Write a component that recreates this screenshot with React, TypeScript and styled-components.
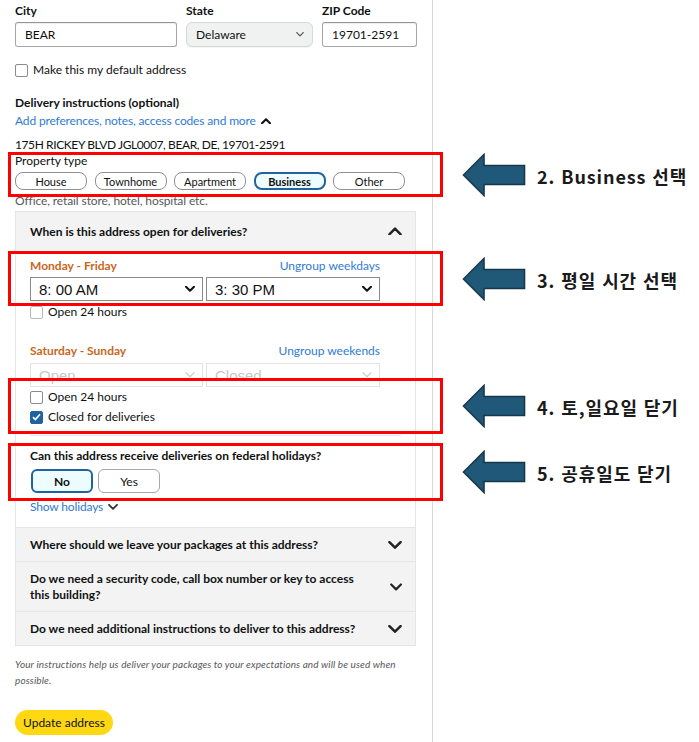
import React from 'react';
import styled, { createGlobalStyle } from 'styled-components';

const GlobalStyle = createGlobalStyle`
  body {
    margin: 0;
    background: #fff;
    font-family: Lato, "Noto Sans", sans-serif;
    font-size: 12px;
    color: #0f1111;
  }
`;

const Page = styled.div`
  width: 699px;
  height: 742px;
  overflow: hidden;
  display: flex;
`;

const FormColumn = styled.div`
  width: 433px;
  min-height: 742px;
  box-sizing: border-box;
  padding: 3px 16px 0 15px;
  border-right: 1px solid #d5d9d9;
`;

const FieldRow = styled.div`
  display: grid;
  grid-template-columns: 162px 127px 95px;
  column-gap: 9px;
`;

const FieldLabel = styled.div`
  font-weight: 700;
  line-height: 16px;
  margin-bottom: 3px;
`;

const TextInput = styled.div`
  height: 25px;
  box-sizing: border-box;
  border: 1px solid #a6a6a6;
  border-top-color: #949494;
  border-radius: 3px;
  box-shadow: inset 0 1px 0 rgba(0, 0, 0, 0.06);
  padding: 0 9px;
  display: flex;
  align-items: center;
`;

const SelectBox = styled.div`
  height: 25px;
  box-sizing: border-box;
  border: 1px solid #d5d9d9;
  border-radius: 6px;
  background: #f0f2f2;
  box-shadow: 0 1px 1px rgba(0, 0, 0, 0.05);
  padding: 0 8px 0 9px;
  display: flex;
  align-items: center;
  justify-content: space-between;
`;

const CheckRow = styled.label<{ $top?: number }>`
  display: flex;
  align-items: center;
  gap: 5px;
  line-height: 16px;
  margin-top: ${({ $top }) => $top ?? 0}px;
  color: #0f1111;
`;

const Box = styled.span<{ $checked?: boolean; $light?: boolean }>`
  width: 11px;
  height: 11px;
  border: 1px solid ${({ $checked, $light }) => ($checked ? '#2162a1' : $light ? '#b9b9b9' : '#888c8c')};
  border-radius: 2px;
  background: ${({ $checked }) => ($checked ? '#2162a1' : '#fff')};
  display: flex;
  align-items: center;
  justify-content: center;
  flex-shrink: 0;
`;

const SectionTitle = styled.div`
  font-weight: 700;
  line-height: 16px;
  margin-top: 17px;
`;

const Link = styled.span`
  display: inline-flex;
  align-items: center;
  gap: 5px;
  color: #2f7bd4;
  line-height: 16px;
`;

const LinkLine = styled.div<{ $top: number }>`
  margin-top: ${({ $top }) => $top}px;
  line-height: 16px;
  letter-spacing: -0.15px;
`;

const AddressLine = styled.div`
  margin-top: 8px;
  line-height: 16px;
  letter-spacing: -0.4px;
`;

const Annotation = styled.div`
  position: relative;
`;

const Frame = styled.div<{ $t: number; $b: number; $l: number; $r: number }>`
  position: absolute;
  top: ${({ $t }) => $t}px;
  bottom: ${({ $b }) => $b}px;
  left: ${({ $l }) => $l}px;
  right: ${({ $r }) => $r}px;
  border: 3px solid #ff0000;
  pointer-events: none;
`;

const Callout = styled.div`
  position: absolute;
  left: calc(100% + 22px);
  top: 50%;
  transform: translateY(-50%);
  display: flex;
  align-items: center;
  gap: 11px;
  white-space: nowrap;
`;

const CalloutText = styled.span`
  font-family: "Noto Sans CJK KR", "Noto Sans", sans-serif;
  font-weight: 700;
  font-size: 18px;
  color: #1a1a1a;
  letter-spacing: 0.9px;
  word-spacing: 1px;
  margin-top: 2px;
`;

const SmallLabel = styled.div`
  line-height: 16px;
  font-size: 12px;
`;

const PillRow = styled.div`
  display: flex;
  gap: 7.5px;
  margin-top: 3px;
`;

const Pill = styled.div<{ $active?: boolean }>`
  width: 72px;
  height: 18px;
  box-sizing: border-box;
  border-radius: 8px;
  border: ${({ $active }) => ($active ? '2px solid #2162a1' : '1px solid #8d9096')};
  background: ${({ $active }) => ($active ? '#edfdff' : '#fff')};
  font-size: 11px;
  font-weight: ${({ $active }) => ($active ? 700 : 400)};
  display: flex;
  align-items: center;
  justify-content: center;
`;

const Hint = styled.div`
  color: #565959;
  line-height: 16px;
  margin-top: 3px;
  letter-spacing: -0.1px;
`;

const Panel = styled.div`
  margin-top: 2px;
  border: 1px solid #e3e6e6;
`;

const PanelHeader = styled.div`
  height: 38px;
  box-sizing: border-box;
  background: #f3f3f3;
  padding: 0 13px 0 14px;
  display: flex;
  align-items: center;
  justify-content: space-between;
  font-weight: 700;
`;

const PanelBody = styled.div`
  padding: 8px 14px 12px;
  background: #fff;
`;

const DayHead = styled.div<{ $top?: number }>`
  display: flex;
  justify-content: space-between;
  width: 350px;
  line-height: 16px;
  margin-top: ${({ $top }) => $top ?? 0}px;
`;

const DayName = styled.span`
  color: #c8661c;
  font-weight: 700;
`;

const TimeRow = styled.div<{ $top: number }>`
  display: grid;
  grid-template-columns: 173px 174px;
  column-gap: 3px;
  margin-top: ${({ $top }) => $top}px;
`;

const TimeSelect = styled.div<{ $disabled?: boolean }>`
  height: 24px;
  box-sizing: border-box;
  border: 1px solid ${({ $disabled }) => ($disabled ? '#e3e3e3' : '#8a8a8a')};
  background: #fff;
  padding: 0 7px 0 8px;
  display: flex;
  align-items: center;
  justify-content: space-between;
  font-family: "Liberation Sans", Arial, sans-serif;
  font-size: 15px;
  color: ${({ $disabled }) => ($disabled ? '#c8c8c8' : '#111')};
`;

const Divider = styled.div`
  height: 1px;
  background: #e7e7e7;
  margin-top: 10px;
`;

const Question = styled.div`
  font-weight: 700;
  line-height: 16px;
  padding-top: 12px;
`;

const ChoiceRow = styled.div`
  display: flex;
  gap: 5px;
  margin-top: 5px;
  padding-left: 1px;
`;

const Choice = styled.div<{ $active?: boolean }>`
  width: 62px;
  height: 24px;
  box-sizing: border-box;
  border-radius: 6px;
  border: ${({ $active }) => ($active ? '2px solid #2162a1' : '1px solid #a8a8a8')};
  background: ${({ $active }) => ($active ? '#edfdff' : '#fff')};
  font-weight: ${({ $active }) => ($active ? 700 : 400)};
  display: flex;
  align-items: center;
  justify-content: center;
`;

const AccordionRow = styled.div`
  border-top: 1px solid #e3e6e6;
  background: #f3f3f3;
  padding: 9px 13px 8px 14px;
  display: flex;
  align-items: center;
  justify-content: space-between;
  gap: 16px;
  font-weight: 700;
  line-height: 16px;
`;

const Note = styled.div`
  margin-top: 10px;
  font-size: 10px;
  font-style: italic;
  line-height: 16px;
  color: #565959;
  letter-spacing: 0.1px;
`;

const UpdateButton = styled.div`
  margin-top: 22px;
  width: 98px;
  height: 25px;
  border-radius: 13px;
  background: #ffd814;
  display: flex;
  align-items: center;
  justify-content: center;
  color: #0f1111;
`;

const Chevron = ({ up, size = 10, color = '#111', weight = 2 }: { up?: boolean; size?: number; color?: string; weight?: number }) => (
  <svg width={size} height={size * 0.6} viewBox="0 0 10 6" fill="none">
    <path
      d={up ? 'M1 5.2 L5 1.2 L9 5.2' : 'M1 0.8 L5 4.8 L9 0.8'}
      stroke={color}
      strokeWidth={weight}
      strokeLinecap="round"
      strokeLinejoin="round"
    />
  </svg>
);

const Check = () => (
  <svg width="9" height="8" viewBox="0 0 9 8">
    <path d="M1 4.2 L3.4 6.5 L8 1.2" stroke="#fff" strokeWidth="1.7" fill="none" />
  </svg>
);

const Arrow = () => (
  <svg width="64" height="44" viewBox="0 0 64 44">
    <polygon
      points="1.5,22 22,1.5 22,12.5 62.5,12.5 62.5,31.5 22,31.5 22,42.5"
      fill="#1f5878"
      stroke="#17384c"
      strokeWidth="1.6"
      strokeLinejoin="miter"
    />
  </svg>
);

type Offsets = { t: number; b: number; l: number; r: number };

const Annotated = ({ frame, label, children }: { frame: Offsets; label: string; children: React.ReactNode }) => (
  <Annotation>
    {children}
    <Frame $t={frame.t} $b={frame.b} $l={frame.l} $r={frame.r}>
      <Callout>
        <Arrow />
        <CalloutText>{label}</CalloutText>
      </Callout>
    </Frame>
  </Annotation>
);

const propertyTypes = ['House', 'Townhome', 'Apartment', 'Business', 'Other'];

const accordions = [
  'Where should we leave your packages at this address?',
  'Do we need a security code, call box number or key to access this building?',
  'Do we need additional instructions to deliver to this address?',
];

export default function App() {
  return (
    <>
      <GlobalStyle />
      <Page>
        <FormColumn>
          <FieldRow>
            <div>
              <FieldLabel>City</FieldLabel>
              <TextInput>BEAR</TextInput>
            </div>
            <div>
              <FieldLabel>State</FieldLabel>
              <SelectBox>
                Delaware
                <Chevron size={8} color="#555" weight={1.6} />
              </SelectBox>
            </div>
            <div>
              <FieldLabel>ZIP Code</FieldLabel>
              <TextInput>19701-2591</TextInput>
            </div>
          </FieldRow>

          <CheckRow $top={15}>
            <Box />
            Make this my default address
          </CheckRow>

          <SectionTitle>Delivery instructions (optional)</SectionTitle>
          <LinkLine $top={2}>
            <Link>
              Add preferences, notes, access codes and more
              <Chevron up size={10} weight={2} />
            </Link>
          </LinkLine>
          <AddressLine>175H RICKEY BLVD JGL0007, BEAR, DE, 19701-2591</AddressLine>

          <Annotated frame={{ t: -1, b: -7, l: -7, r: -27 }} label="2. Business 선택">
            <SmallLabel>Property type</SmallLabel>
            <PillRow>
              {propertyTypes.map((p) => (
                <Pill key={p} $active={p === 'Business'}>
                  {p}
                </Pill>
              ))}
            </PillRow>
          </Annotated>

          <Hint>Office, retail store, hotel, hospital etc.</Hint>

          <Panel>
            <PanelHeader>
              When is this address open for deliveries?
              <Chevron up size={14} weight={1.8} color="#222" />
            </PanelHeader>
            <PanelBody>
              <Annotated frame={{ t: -7, b: -5, l: -22, r: -42 }} label="3. 평일 시간 선택">
                <DayHead>
                  <DayName>Monday - Friday</DayName>
                  <Link>Ungroup weekdays</Link>
                </DayHead>
                <TimeRow $top={3}>
                  <TimeSelect>
                    8: 00 AM
                    <Chevron size={10} weight={2} />
                  </TimeSelect>
                  <TimeSelect>
                    3: 30 PM
                    <Chevron size={10} weight={2} />
                  </TimeSelect>
                </TimeRow>
              </Annotated>

              <CheckRow $top={3}>
                <Box $light />
                Open 24 hours
              </CheckRow>

              <DayHead $top={23}>
                <DayName>Saturday - Sunday</DayName>
                <Link>Ungroup weekends</Link>
              </DayHead>
              <TimeRow $top={4}>
                <TimeSelect $disabled>
                  Open
                  <Chevron size={10} weight={1.4} color="#d0d0d0" />
                </TimeSelect>
                <TimeSelect $disabled>
                  Closed
                  <Chevron size={10} weight={1.4} color="#d0d0d0" />
                </TimeSelect>
              </TimeRow>

              <Annotated frame={{ t: -11, b: -9, l: -22, r: -42 }} label="4. 토,일요일 닫기">
                <CheckRow $top={2}>
                  <Box />
                  Open 24 hours
                </CheckRow>
                <CheckRow $top={4}>
                  <Box $checked>
                    <Check />
                  </Box>
                  Closed for deliveries
                </CheckRow>
              </Annotated>

              <Divider />

              <Annotated frame={{ t: 7, b: -8, l: -22, r: -42 }} label="5. 공휴일도 닫기">
                <Question>Can this address receive deliveries on federal holidays?</Question>
                <ChoiceRow>
                  <Choice $active>No</Choice>
                  <Choice>Yes</Choice>
                </ChoiceRow>
              </Annotated>

              <LinkLine $top={6}>
                <Link>
                  Show holidays
                  <Chevron size={10} weight={1.8} color="#333" />
                </Link>
              </LinkLine>
            </PanelBody>

            {accordions.map((q) => (
              <AccordionRow key={q}>
                <span>{q}</span>
                <Chevron size={14} weight={1.8} color="#222" />
              </AccordionRow>
            ))}
          </Panel>

          <Note>
            Your instructions help us deliver your packages to your expectations and will be used when possible.
          </Note>

          <UpdateButton>Update address</UpdateButton>
        </FormColumn>
      </Page>
    </>
  );
}
